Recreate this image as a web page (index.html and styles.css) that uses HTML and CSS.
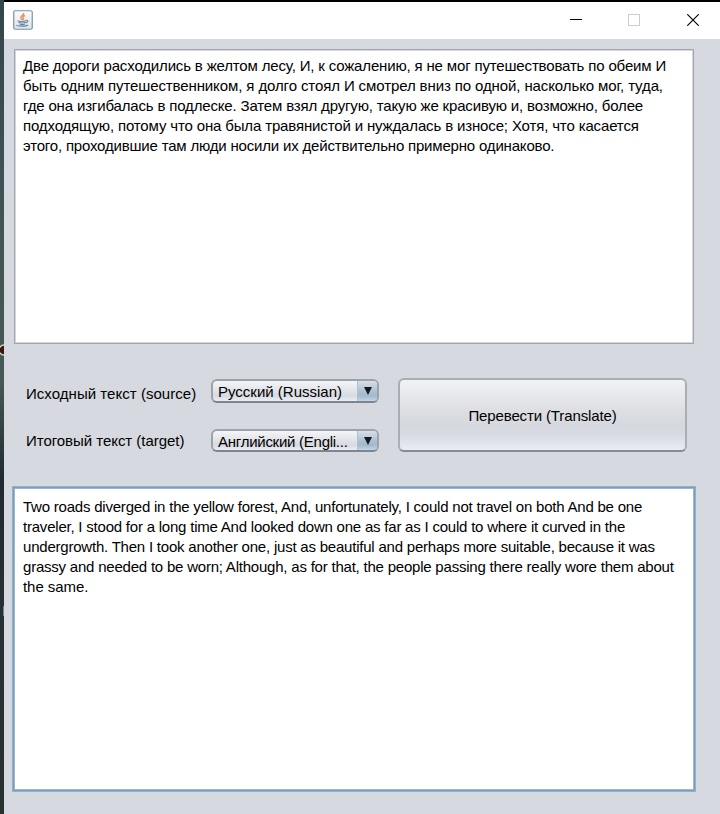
FILE: index.html
```html
<!DOCTYPE html>
<html lang="ru">
<head>
<meta charset="utf-8">
<title>Переводчик</title>
<link rel="stylesheet" href="styles.css">
</head>
<body>
<div class="desktop">
  <svg class="desktop-icon" width="4" height="12" viewBox="0 0 4 12"><circle cx="4" cy="6" r="5" fill="#3b1612" stroke="#d8d8c8" stroke-width="1.3"/></svg>
  <div class="desktop-edge"></div>
</div>
<main class="window">
  <header class="titlebar">
    <svg class="java" width="20" height="20" viewBox="0 0 20 20" fill="none">
      <defs><linearGradient id="g" x1="0" y1="0" x2="0" y2="1"><stop offset="0" stop-color="#fdfdfd"/><stop offset="1" stop-color="#dfe3e6"/></linearGradient></defs>
      <rect x=".75" y=".75" width="18.5" height="18.5" rx="1.5" fill="url(#g)" stroke="#7893a5" stroke-width="1.2"/>
      <path d="M10.500 3c1 2-3 3-2.700 4.800.1 1 1.200 1.700 1.700 2.200M12 5.500c-2 .9-2.700 1.800-1.800 2.800.6.7.3 1.200-.2 1.700" stroke="#e9965a" stroke-width="1.500"/>
      <path d="M4.500 10.700c2 .8 6.500.8 8.500 0M5.500 12.300c1.500.9 5.500.9 7 0M6.500 14c1.500.7 4 .7 5.500 0M13 10.300c2.400-.4 2.400 1.700-.3 2.700M4 14.800c-1.500 1.600 9 2 11 .2" stroke="#6389a5" stroke-width="1.200"/>
    </svg>
    <div class="controls">
      <svg width="12" height="12" viewBox="0 0 12 12"><path d="M0 7.500h12" stroke="#000"/></svg>
      <svg width="12" height="12" viewBox="0 0 12 12"><rect x=".5" y=".5" width="11" height="11" fill="none" stroke="#ccc"/></svg>
      <svg width="12" height="12" viewBox="0 0 12 12"><path d="M.3.3l11.400 11.400M11.700.3L.3 11.700" stroke="#000" stroke-width="1.150"/></svg>
    </div>
  </header>
  <section class="area source">
    <p class="tight">Две дороги расходились в желтом лесу, И, к сожалению, я не мог путешествовать по обеим И</p>
    <p class="loose">быть одним путешественником, я долго стоял И смотрел вниз по одной, насколько мог, туда,</p>
    <p class="tight">где она изгибалась в подлеске. Затем взял другую, такую же красивую и, возможно, более</p>
    <p class="medium">подходящую, потому что она была травянистой и нуждалась в износе; Хотя, что касается</p>
    <p class="tighter">этого, проходившие там люди носили их действительно примерно одинаково.</p>
  </section>
  <section class="form">
    <div class="labels"><span>Исходный текст (source)</span><span>Итоговый текст (target)</span></div>
    <div class="combos">
      <div class="combo"><span class="value">Русский (Russian)</span><span class="arrow"><svg width="8" height="8" viewBox="0 0 8 8"><path d="M0 0h8L4 8z" fill="#161a20"/></svg></span></div>
      <div class="combo"><span class="value narrow">Английский (Engli...</span><span class="arrow"><svg width="8" height="8" viewBox="0 0 8 8"><path d="M0 0h8L4 8z" fill="#161a20"/></svg></span></div>
    </div>
    <button class="translate">Перевести (Translate)</button>
  </section>
  <section class="area target">
    <p>Two roads diverged in the yellow forest, And, unfortunately, I could not travel on both And be one</p>
    <p>traveler, I stood for a long time And looked down one as far as I could to where it curved in the</p>
    <p>undergrowth. Then I took another one, just as beautiful and perhaps more suitable, because it was</p>
    <p>grassy and needed to be worn; Although, as for that, the people passing there really wore them about</p>
    <p>the same.</p>
  </section>
</main>
</body>
</html>
```
FILE: styles.css
```css
* { box-sizing: border-box; }
body {
  margin: 0;
  width: 720px;
  height: 814px;
  overflow: hidden;
  display: flex;
  background: #000;
  font: 15px/20px "Liberation Sans", Arial, sans-serif;
  color: #000;
}
svg { display: block; flex: none; }
.desktop {
  width: 4px;
  flex: none;
  background: linear-gradient(#33474b 0, #405454 200px, #465955 380px, #202a30 480px, #263035 600px, #29312f 814px);
}
.desktop-icon { margin-top: 344px; }
.desktop-edge { width: 1px; height: 10px; margin: 250px 0 0 3px; background: #6e8790; }
.window {
  width: 716px;
  height: 812px;
  margin-top: 2px;
  background: #d6d9df;
  display: flex;
  flex-direction: column;
}
.titlebar {
  height: 37px;
  flex: none;
  background: #fff;
  display: flex;
  align-items: flex-start;
  justify-content: space-between;
  padding: 8px 21px 0 9px;
}
.controls { display: flex; gap: 47px; padding-top: 4px; }
.controls svg:first-child { margin: -2px -1px 0 0; }
p { margin: 0; white-space: nowrap; }
.area { background: #fff; flex: none; }
.source {
  width: 680px;
  height: 295px;
  margin: 10px 0 0 10px;
  border: 1px solid #a0a5af;
  box-shadow: inset 0 0 0 1px #d5d7dc;
  padding: 6px 8px;
}
.tight { letter-spacing: -.16px; }
.tighter { letter-spacing: -.185px; }
.medium { letter-spacing: -.145px; }
.loose { letter-spacing: -.105px; }
.form { display: flex; height: 74px; margin: 34px 0; padding-left: 22px; }
.labels { width: 185px; display: flex; flex-direction: column; gap: 27px; padding-top: 6px; white-space: nowrap; }
.labels span:first-child { letter-spacing: .04px; }
.labels span:last-child { letter-spacing: -.04px; }
.combos { width: 168px; display: flex; flex-direction: column; gap: 26px; padding-top: 1px; }
.combo {
  height: 24px;
  display: flex;
  border: 2px solid #9da2ac;
  border-bottom-color: #7f858f;
  border-radius: 6px;
  overflow: hidden;
  background: linear-gradient(#f4f5f7, #dfe1e6 55%, #d6dae1 75%, #ebeef5);
}
.value { flex: 1; padding-left: 5px; line-height: 21px; white-space: nowrap; }
.narrow { letter-spacing: -.26px; }
.arrow {
  width: 20px;
  flex: none;
  display: flex;
  justify-content: center;
  padding-top: 6px;
  border-left: 1px solid #b2c1cf;
  background: linear-gradient(#d5e0e9, #abbfd0 55%, #a4bacd 75%, #c0d7ec);
}
.translate {
  width: 289px;
  height: 74px;
  margin-left: 19px;
  padding: 2px 0 0;
  border: 2px solid #aaadb4;
  border-bottom-color: #858a94;
  border-radius: 6px;
  background: linear-gradient(#f1f2f4, #dfe0e4 40%, #d5d8de 65%, #d7dae1 78%, #e9ecf4);
  font: inherit;
  letter-spacing: -.13px;
  color: #000;
}
.target {
  width: 684px;
  height: 306px;
  margin-left: 8px;
  border: 1px solid #8eb1d2;
  box-shadow: inset 0 0 0 1px #7a9ebf, inset 0 0 0 2px #a5b2bf;
  padding: 10px;
}
.target p { letter-spacing: -.215px; }
.target p:last-child { letter-spacing: -.05px; }
```
